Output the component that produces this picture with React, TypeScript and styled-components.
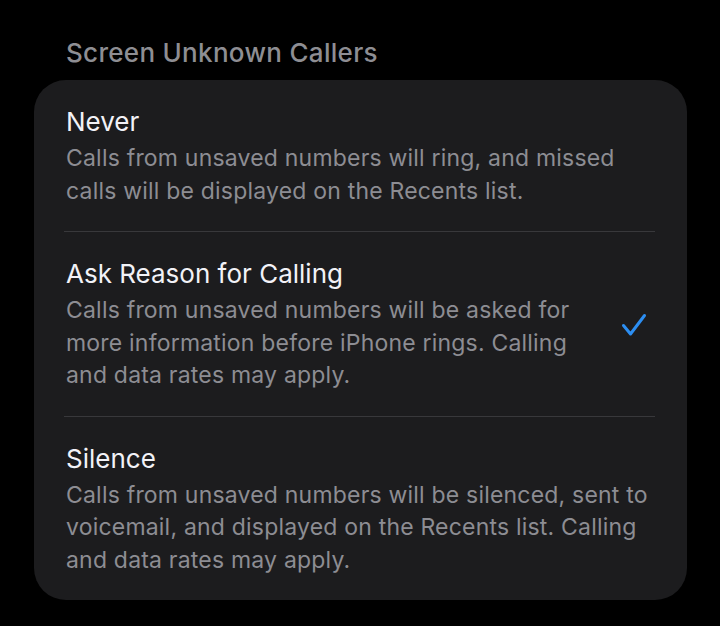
import React, { FC } from 'react';
import styled, { createGlobalStyle } from 'styled-components';

const GlobalStyle = createGlobalStyle`
  html, body {
    margin: 0;
    padding: 0;
    background: #000;
  }

  body {
    font-family: Inter, "Noto Sans", "Liberation Sans", sans-serif;
    -webkit-font-smoothing: antialiased;
  }
`;

const Page = styled.div`
  width: 720px;
  height: 626px;
  box-sizing: border-box;
  padding: 37px 33px 0 34px;
  background: #000;
`;

const SectionHeader = styled.h2`
  margin: 0 0 11px;
  padding-left: 32px;
  font-size: 26px;
  line-height: 32px;
  font-weight: 500;
  color: #8e8e93;
  letter-spacing: 0.3px;
`;

const Card = styled.div`
  background: #1c1c1e;
  border-radius: 32px;
  overflow: hidden;
`;

const Row = styled.div`
  display: flex;
  align-items: center;
  padding: 26px 32px 24px 32px;
`;

const Texts = styled.div`
  flex: 1;
  display: flex;
  flex-direction: column;
  gap: 4px;
`;

const Title = styled.div`
  font-size: 26px;
  line-height: 32px;
  color: #f2f2f7;
  white-space: nowrap;
`;

const Description = styled.div`
  font-size: 23px;
  line-height: 32.5px;
  letter-spacing: 0.2px;
  color: #8d8d93;
  white-space: nowrap;
`;

const Divider = styled.div`
  height: 1px;
  margin: 0 32px 0 30px;
  background: #38383b;
`;

const CheckMark = styled.svg`
  flex: none;
  width: 26px;
  height: 24px;
  margin-right: 8px;
`;

interface Option {
  title: string;
  lines: string[];
  selected?: boolean;
}

const options: Option[] = [
  {
    title: 'Never',
    lines: [
      'Calls from unsaved numbers will ring, and missed',
      'calls will be displayed on the Recents list.',
    ],
  },
  {
    title: 'Ask Reason for Calling',
    lines: [
      'Calls from unsaved numbers will be asked for',
      'more information before iPhone rings. Calling',
      'and data rates may apply.',
    ],
    selected: true,
  },
  {
    title: 'Silence',
    lines: [
      'Calls from unsaved numbers will be silenced, sent to',
      'voicemail, and displayed on the Recents list. Calling',
      'and data rates may apply.',
    ],
  },
];

const OptionRow: FC<Option> = ({ title, lines, selected }) => (
  <Row>
    <Texts>
      <Title>{title}</Title>
      <Description>
        {lines.map((line, i) => (
          <React.Fragment key={i}>
            {i > 0 && <br />}
            {line}
          </React.Fragment>
        ))}
      </Description>
    </Texts>
    {selected && (
      <CheckMark viewBox="0 0 26 24" fill="none">
        <path
          d="M2.5 12.5 L9.5 21 L23.5 2.5"
          stroke="#2c8ef2"
          strokeWidth="3"
          strokeLinecap="round"
          strokeLinejoin="round"
        />
      </CheckMark>
    )}
  </Row>
);

const App: FC = () => (
  <>
    <GlobalStyle />
    <Page>
      <SectionHeader>Screen Unknown Callers</SectionHeader>
      <Card>
        {options.map((option, i) => (
          <React.Fragment key={option.title}>
            {i > 0 && <Divider />}
            <OptionRow {...option} />
          </React.Fragment>
        ))}
      </Card>
    </Page>
  </>
);

export default App;
